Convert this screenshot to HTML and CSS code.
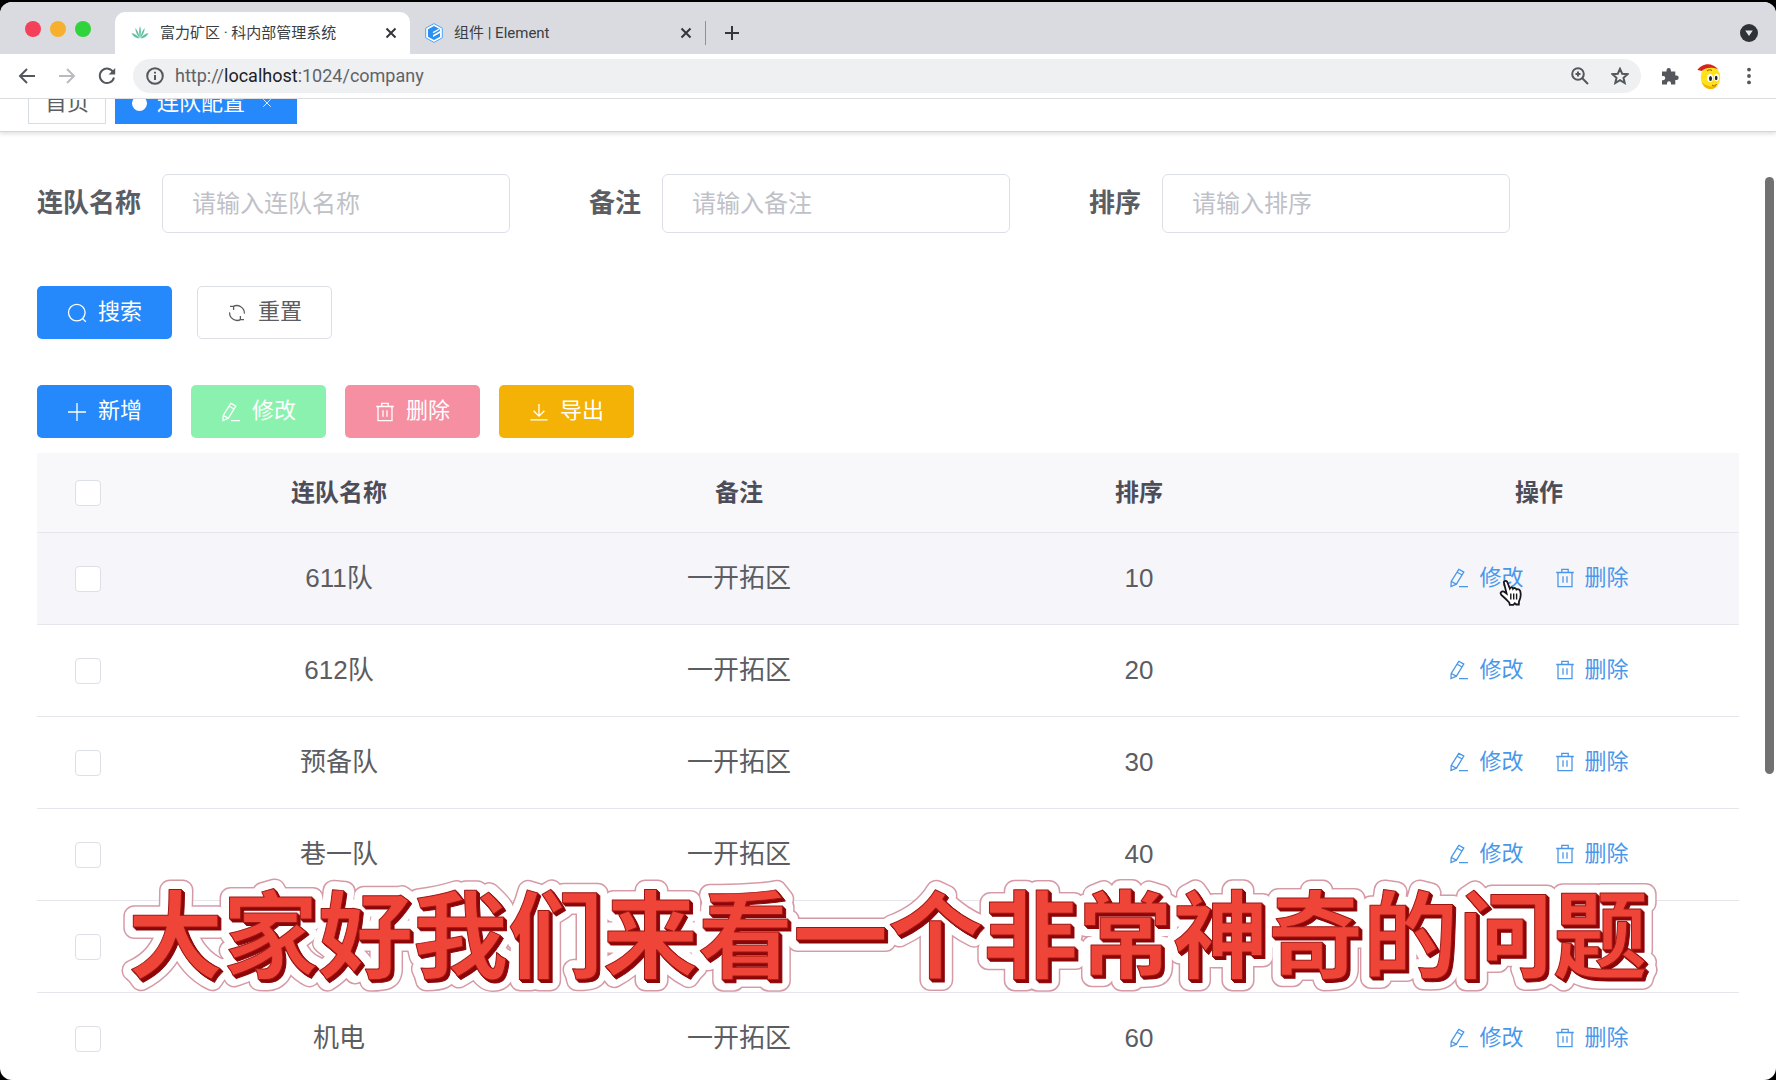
FILE: index.html
```html
<!DOCTYPE html>
<html lang="zh-CN">
<head>
<meta charset="utf-8">
<meta name="viewport" content="width=device-width, initial-scale=1">
<title>富力矿区 · 科内部管理系统</title>
<link rel="stylesheet" href="styles.css">
</head>
<body>
<svg class="sprite" aria-hidden="true">
  <symbol id="i-edit" viewBox="0 0 20 20"><path d="M9.8 1.3 14.8 4.1 7.4 16.2 2 18.6 2.2 13.4ZM8.2 4.2 13.1 7M2.3 13.5 7.3 16.1M10 18.6H19"/></symbol>
  <symbol id="i-trash" viewBox="0 0 20 20"><path d="M1.2 4.5H18.8M3 4.5V18.7H17V4.5M6.8 4.2V1.4H13.2V4.2M8 8.2V14.8M12 8.2V14.8"/></symbol>
  <symbol id="i-search" viewBox="0 0 20 20"><circle cx="9.8" cy="9.6" r="8.3"/><path d="M15.6 15.6 18.8 18.8"/></symbol>
  <symbol id="i-refresh" viewBox="0 0 20 20"><path d="M6 3.6A7.6 7.6 0 0 1 17.4 10.6M14 16.4A7.6 7.6 0 0 1 2.6 9.4M3 3.4H6.6V7M17 16.6H13.4V13"/></symbol>
  <symbol id="i-plus" viewBox="0 0 20 20"><path d="M10 1V19M1 10H19"/></symbol>
  <symbol id="i-download" viewBox="0 0 20 20"><path d="M10 2V13.6M4.6 8.8 10 14.2 15.4 8.8M1.4 17.8H18.6"/></symbol>
  <symbol id="i-close" viewBox="0 0 12 12"><path d="M1.5 1.5 10.5 10.5M10.5 1.5 1.5 10.5"/></symbol>
</svg>

<div class="window">
  <header class="tabstrip">
    <div class="lights"><i class="light red"></i><i class="light amber"></i><i class="light green"></i></div>
    <div class="tab active">
      <svg class="favicon" viewBox="0 0 18 18" aria-hidden="true"><path fill="#5cbf9f" d="M9 2C10.2 5.5 10.2 9.500 9 14C7.800 9.500 7.800 5.500 9 2ZM4.200 4C6.600 6.500 8 10 8.700 14C6.200 11.500 4.600 8 4.200 4ZM13.800 4C13.400 8 11.800 11.500 9.300 14C10 10 11.400 6.500 13.800 4ZM.5 9C4 10 6.500 11.500 8.500 14.500C5 14 2 12.500 .5 9ZM17.500 9C16 12.500 13 14 9.500 14.500C11.500 11.500 14 10 17.500 9Z"/></svg>
      <span class="tab-title">富力矿区 · 科内部管理系统</span>
      <button class="icon-btn" aria-label="关闭标签页"><svg class="x" aria-hidden="true"><use href="#i-close"/></svg></button>
    </div>
    <div class="tab second">
      <svg class="favicon" viewBox="0 0 18 20" aria-hidden="true"><path d="M9 .6 17.300 5.200V14.800L9 19.400.7 14.800V5.200Z" fill="#fff" stroke="#4aa3ff"/><path d="M9 3 15 6.300V8L8 12V14L15 10V13.700L9 17 3 13.700V6.300Z" fill="#2d8ff0"/><path d="M8 9.600 14.500 6" stroke="#fff" stroke-width="1.300"/></svg>
      <span class="tab-title">组件 | Element</span>
      <button class="icon-btn" aria-label="关闭标签页"><svg class="x" aria-hidden="true"><use href="#i-close"/></svg></button>
    </div>
    <button class="icon-btn new-tab" aria-label="新标签页"><svg aria-hidden="true" viewBox="0 0 16 16"><path d="M8 1V15M1 8H15"/></svg></button>
    <button class="icon-btn tab-search" aria-label="搜索标签页"><svg viewBox="0 0 18 18" aria-hidden="true"><circle cx="9" cy="9" r="9" fill="#2f3338"/><path d="M5.200 6.500H12.800L9 12Z" fill="#e4e7ea"/></svg></button>
  </header>

  <nav class="toolbar" aria-label="浏览器">
    <button class="icon-btn" aria-label="后退"><svg class="nav-icon" viewBox="0 0 18 18"><path d="M17 9H2M9 2 2 9 9 16"/></svg></button>
    <button class="icon-btn faded" aria-label="前进"><svg class="nav-icon" viewBox="0 0 18 18"><path d="M1 9H16M9 2 16 9 9 16"/></svg></button>
    <button class="icon-btn" aria-label="刷新"><svg class="nav-icon" viewBox="0 0 18 18"><path d="M15.400 5.500A7.200 7.200 0 1 0 16 10.500"/><path d="M17.200 1V7.600H10.600Z" fill="currentColor" stroke="none"/></svg></button>
    <div class="omnibox">
      <svg class="nav-icon thin" viewBox="0 0 18 18" aria-hidden="true"><circle cx="9" cy="9" r="7.800"/><path d="M9 8V13M9 4.800V6.500"/></svg>
      <span class="url">http://<b>localhost</b>:1024/company</span>
      <button class="icon-btn" aria-label="缩放"><svg class="nav-icon" viewBox="0 0 18 18"><circle cx="7" cy="7" r="5.800"/><path d="M11.300 11.300 17 17M7 4.500V9.500M4.500 7H9.500"/></svg></button>
      <button class="icon-btn" aria-label="收藏"><svg class="nav-icon" viewBox="0 0 18 18"><path d="M9 1.800 11.200 6.700 16.500 7.200 12.500 10.800 13.700 16 9 13.200 4.300 16 5.500 10.800 1.500 7.200 6.800 6.700Z"/></svg></button>
    </div>
    <button class="icon-btn" aria-label="扩展程序"><svg class="nav-icon" viewBox="0 0 18 18"><path fill="currentColor" stroke="none" d="M1 4.500H5.500V3.200A2.200 2.200 0 0 1 9.900 3.200V4.500H14.300V8.600H15.500A2.200 2.200 0 0 1 15.500 13H14.300V17.500H10V16.300A2 2 0 0 0 6 16.300V17.500H1V13.200H2.200A2 2 0 0 0 2.200 9H1Z"/></svg></button>
    <button class="icon-btn profile" aria-label="用户"><svg class="avatar" viewBox="0 0 24 28"><ellipse cx="13.500" cy="15.500" rx="9.800" ry="11.500" fill="#ffe21a"/><path d="M4.500 20A9.800 11.500 0 0 0 20.500 23.500C15 26 9 24 4.500 20Z" fill="#f5b400"/><path d="M.5 8C4 2 14-1 21 7C13 4.500 7 6 5 9Z" fill="#d8231d"/><ellipse cx="13" cy="16" rx="3" ry="4" fill="#fff"/><ellipse cx="19.500" cy="15.500" rx="2.500" ry="3.700" fill="#fff"/><ellipse cx="13.500" cy="16.500" rx="1.500" ry="2.500" fill="#20242a"/><ellipse cx="19.200" cy="16" rx="1.300" ry="2.300" fill="#20242a"/><path d="M10 9C11.500 7.500 13.500 7.500 15 8.500M15 23C17 24.500 18.500 24 19.500 22" stroke="#9c4d00" fill="none"/></svg></button>
    <button class="icon-btn" aria-label="更多"><svg class="nav-icon" viewBox="0 0 18 18"><g fill="currentColor" stroke="none"><circle cx="9" cy="2.600" r="1.900"/><circle cx="9" cy="9" r="1.900"/><circle cx="9" cy="15.400" r="1.900"/></g></svg></button>
  </nav>

  <main class="page">
    <nav class="tags" aria-label="已打开页面">
      <a class="tag" href="#">首页</a>
      <a class="tag current" href="#"><i class="dot"></i>连队配置<svg class="tag-x" aria-hidden="true"><use href="#i-close"/></svg></a>
    </nav>

    <div class="content">
      <form class="filters">
        <div class="field"><label for="f-name">连队名称</label><input id="f-name" type="text" placeholder="请输入连队名称"></div>
        <div class="field"><label for="f-note">备注</label><input id="f-note" type="text" placeholder="请输入备注"></div>
        <div class="field"><label for="f-sort">排序</label><input id="f-sort" type="text" placeholder="请输入排序"></div>
        <div class="submit">
          <button type="button" class="btn primary"><svg><use href="#i-search"/></svg>搜索</button>
          <button type="button" class="btn plain"><svg><use href="#i-refresh"/></svg>重置</button>
        </div>
      </form>

      <div class="actions">
        <button class="btn primary"><svg><use href="#i-plus"/></svg>新增</button>
        <button class="btn success" disabled><svg><use href="#i-edit"/></svg>修改</button>
        <button class="btn danger" disabled><svg><use href="#i-trash"/></svg>删除</button>
        <button class="btn warning"><svg><use href="#i-download"/></svg>导出</button>
      </div>

      <table class="grid">
        <thead>
          <tr><th class="check"><input type="checkbox" aria-label="全选"></th><th>连队名称</th><th>备注</th><th>排序</th><th>操作</th></tr>
        </thead>
        <tbody>
          <tr class="hover"><td><input type="checkbox" aria-label="选择 611队"></td><td>611队</td><td>一开拓区</td><td>10</td><td><div class="ops"><button class="link"><svg><use href="#i-edit"/></svg>修改</button><button class="link"><svg><use href="#i-trash"/></svg>删除</button>
            <svg class="pointer" viewBox="0 0 24 28" aria-hidden="true"><path d="M4.800 3.200C5.800 1 8 1.500 8.600 3.800L10.800 9.500C11.500 8 13.500 8 14 9.800C15 8.500 17 8.800 17.500 10.600C19 9.600 21.200 10.600 21.400 13C22.400 17.500 21.500 19.500 20 22.500L19.800 25.500H17.200L15.800 24.200 14.400 25.800H10.800L10.200 23.500C7.500 20.500 5.500 18.600 2.400 16C.6 14 2.400 11.800 4.800 12.600L7.600 14.600Z" fill="#fff" stroke="#16161f" stroke-width="1.800"/><path d="M11.800 14.500V20.500M14.700 14.500V20.500M17.600 14.500V20.500" stroke="#16161f" stroke-width="1.400"/></svg></div></td></tr>
          <tr><td><input type="checkbox" aria-label="选择 612队"></td><td>612队</td><td>一开拓区</td><td>20</td><td><div class="ops"><button class="link"><svg><use href="#i-edit"/></svg>修改</button><button class="link"><svg><use href="#i-trash"/></svg>删除</button></div></td></tr>
          <tr><td><input type="checkbox" aria-label="选择 预备队"></td><td>预备队</td><td>一开拓区</td><td>30</td><td><div class="ops"><button class="link"><svg><use href="#i-edit"/></svg>修改</button><button class="link"><svg><use href="#i-trash"/></svg>删除</button></div></td></tr>
          <tr><td><input type="checkbox" aria-label="选择 巷一队"></td><td>巷一队</td><td>一开拓区</td><td>40</td><td><div class="ops"><button class="link"><svg><use href="#i-edit"/></svg>修改</button><button class="link"><svg><use href="#i-trash"/></svg>删除</button></div></td></tr>
          <tr><td><input type="checkbox" aria-label="选择该行"></td><td></td><td></td><td></td><td></td></tr>
          <tr><td><input type="checkbox" aria-label="选择 机电"></td><td>机电</td><td>一开拓区</td><td>60</td><td><div class="ops"><button class="link"><svg><use href="#i-edit"/></svg>修改</button><button class="link"><svg><use href="#i-trash"/></svg>删除</button></div></td></tr>
        </tbody>
      </table>
    </div>
    <div class="scrollbar"></div>
  </main>
</div>

<svg class="caption">
  <use class="rim" href="#caption-text"/>
  <use class="halo" href="#caption-text"/>
  <g class="depth"><use href="#caption-text" x="1" y="1"/><use href="#caption-text" x="2" y="2"/><use href="#caption-text" x="3" y="3"/></g>
  <g class="face"><text id="caption-text" x="50%" y="92" text-anchor="middle">大家好我们来看一个非常神奇的问题</text></g>
</svg>
</body>
</html>
```

FILE: styles.css
```css
* { box-sizing: border-box; }

body {
  margin: 0;
  height: 100vh;
  overflow: hidden;
  background: #000;
  color: #5b5d62;
  font-family: "Liberation Sans", "Noto Sans CJK SC", sans-serif;
  line-height: 1.4;
}

button, input { font: inherit; color: inherit; margin: 0; }
button { border: 0; background: none; padding: 0; }
a { text-decoration: none; color: inherit; }
svg { display: block; fill: none; stroke: currentColor; flex: none; }
.sprite { position: absolute; width: 0; height: 0; }

.window {
  display: flex;
  flex-direction: column;
  height: calc(100vh - 2px);
  margin-top: 2px;
  overflow: hidden;
  border-radius: 12px;
  background: #fff;
}

/* Browser tabs */
.tabstrip {
  display: flex;
  align-items: flex-end;
  flex: none;
  height: 52px;
  padding-right: 18px;
  background: #d9dbe0;
  font-family: Roboto, "Noto Sans CJK SC", sans-serif;
  font-size: 15px;
  color: #3a3d42;
}
.lights { display: flex; gap: 9px; width: 115px; padding: 0 0 17px 25px; }
.light { width: 16px; height: 16px; border-radius: 50%; }
.red { background: #f5405a; }
.amber { background: #f6b02d; }
.green { background: #30d33b; }
.tab { display: flex; align-items: center; height: 42px; gap: 11px; }
.tab.active { width: 295px; padding: 0 13px 0 16px; background: #fff; border-radius: 10px 10px 0 0; }
.tab.second { width: 296px; padding: 0 13px 0 15px; border-right: 1px solid #8d9096; height: 24px; margin-bottom: 9px; }
.tab-title { flex: 1; white-space: nowrap; }
.favicon { width: 18px; height: 20px; stroke: none; }
.x { width: 12px; height: 12px; stroke-width: 2; }
.icon-btn { display: block; flex: none; color: #54575c; }
.tabstrip .icon-btn { color: #33363b; }
.new-tab { margin: 0 auto 13px 18px; }
.new-tab svg { width: 16px; height: 16px; stroke-width: 2; }
.tab-search { margin-bottom: 12px; }
.tab-search svg { width: 18px; height: 18px; stroke: none; }

/* Address bar */
.toolbar {
  display: flex;
  align-items: center;
  flex: none;
  gap: 22px;
  height: 45px;
  padding: 0 18px;
  border-bottom: 1px solid #dcdde0;
}
.nav-icon { width: 18px; height: 18px; stroke-width: 2; }
.nav-icon.thin { color: #54575c; }
.faded { color: #b9bbbf; }
.omnibox {
  display: flex;
  align-items: center;
  flex: 1;
  gap: 22px;
  height: 34px;
  margin: 0 -2px 0 -5px;
  padding: 0 12px 0 13px;
  border-radius: 17px;
  background: #eff0f2;
}
.url { flex: 1; margin-left: -11px; font-family: Roboto, sans-serif; font-size: 18px; color: #5f6368; }
.url b { font-weight: 400; color: #202124; }
.profile { margin: 0 -3px 0 -4px; }
.avatar { width: 24px; height: 28px; stroke: none; }

/* Page */
.page { position: relative; flex: 1; min-height: 0; overflow: hidden; }
.tags {
  display: flex;
  align-items: flex-end;
  gap: 9px;
  height: 33px;
  padding: 0 28px 7px;
  overflow: hidden;
  border-bottom: 1px solid #d4d6da;
  box-shadow: 0 2px 4px #0000001f;
  font-size: 22px;
}
.tag {
  display: flex;
  align-items: center;
  flex: none;
  height: 42px;
  padding: 0 16px;
  border: 1px solid #d8dce5;
  background: #fff;
}
.tag.current { gap: 10px; padding: 0 24px 0 16px; border-color: #2588fb; background: #2588fb; color: #fff; }
.dot { width: 15px; height: 15px; border-radius: 50%; background: #fff; }
.tag-x { width: 10px; height: 10px; margin-left: 7px; stroke-width: 1; }

.content { padding: 42px 37px 0; }
.filters { display: flex; flex-wrap: wrap; gap: 53px 79px; }
.field { display: flex; align-items: center; gap: 21px; }
.field label { padding-bottom: 2px; font-size: 26px; font-weight: 700; line-height: 36px; }
.field input {
  width: 348px;
  height: 59px;
  padding: 0 29px;
  border: 1px solid #dcdfe6;
  border-radius: 6px;
  background: #fff;
  font-size: 24px;
}
.field input::placeholder { color: #bfc1c8; opacity: 1; }
.submit { display: flex; flex-basis: 100%; gap: 25px; }

.btn {
  display: flex;
  align-items: center;
  justify-content: center;
  gap: 11px;
  width: 135px;
  height: 53px;
  border-radius: 5px;
  color: #fff;
  font-size: 22px;
}
.btn svg, .link svg { width: 20px; height: 20px; stroke-width: 1.3; }
.primary { background: #2588fb; }
.plain { border: 1px solid #dcdfe6; background: #fff; color: #5b5d62; }
.success { background: #8af2ae; }
.danger { background: #f58fa1; }
.warning { background: #f5b206; }
.actions { display: flex; gap: 19px; margin: 46px 0 15px; }

.grid { width: 100%; table-layout: fixed; border-collapse: separate; border-spacing: 0; font-size: 26px; }
.grid th, .grid td { padding: 0; border-bottom: 1px solid #e4e6ec; text-align: center; vertical-align: middle; }
.grid th { height: 80px; background: #f8f7fa; color: #4c4d59; font-size: 24px; font-weight: 700; }
.grid td { height: 92px; }
.grid .check { width: 102px; }
.grid .hover td { background: #f5f5fa; }
.grid input {
  display: block;
  width: 26px;
  height: 26px;
  margin: 0 auto 0 38px;
  appearance: none;
  border: 1px solid #dcdfe6;
  border-radius: 4px;
  background: #fff;
}
.ops { position: relative; display: flex; justify-content: center; gap: 31px; }
.link { display: flex; align-items: center; gap: 10px; color: #4a97ea; font-size: 22px; }
.pointer { position: absolute; left: calc(50% - 40px); top: 16px; width: 24px; height: 28px; }

.scrollbar { position: absolute; top: 78px; right: 2px; width: 9px; height: 597px; border-radius: 5px; background: #717171; }

/* Video subtitle over the page */
.caption {
  position: absolute;
  left: 0;
  bottom: 71px;
  width: 100%;
  height: 130px;
  overflow: visible;
  pointer-events: none;
  font-family: "Noto Sans CJK SC", sans-serif;
  font-size: 95px;
  font-weight: 700;
  stroke-linejoin: round;
}
.rim { fill: #d59aa6; stroke: #d59aa6; stroke-width: 22px; transform: translate(1px, 1px); }
.halo { fill: #fff; stroke: #fff; stroke-width: 19px; transform: translate(1px, 1px); }
.depth { fill: #8e0508; stroke: #8e0508; stroke-width: 1px; }
.face { fill: #ee4538; stroke: #9c1512; stroke-width: 1px; }
```
